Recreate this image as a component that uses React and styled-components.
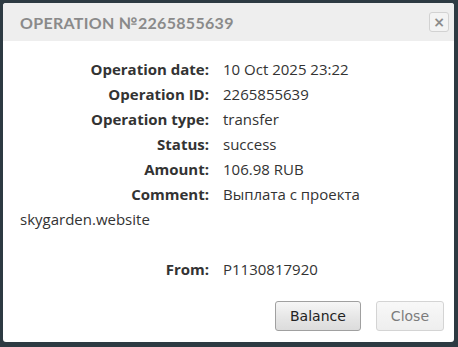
import React from "react";
import styled, { createGlobalStyle } from "styled-components";

const GlobalStyle = createGlobalStyle`
  html, body {
    margin: 0;
    padding: 0;
    background-color: #2d3a42;
  }
  #root {
    padding: 3px 4px 5px 3px;
  }
`;

const Dialog = styled.div`
  background-color: #fff;
  border-radius: 3px;
  height: 339px;
  display: flex;
  flex-direction: column;
  overflow: hidden;
  font-family: "Open Sans", "Liberation Sans", sans-serif;
`;

const Header = styled.div`
  height: 38px;
  background-color: #eeeeee;
  display: flex;
  align-items: center;
  justify-content: space-between;
  padding: 0 5px 0 17px;
  box-sizing: border-box;
`;

const Title = styled.h3`
  margin: 0;
  font-family: "Lato", "Liberation Sans", sans-serif;
  font-weight: 700;
  font-size: 16px;
  letter-spacing: 0.3px;
  color: #8a8a8a;
`;

const CloseX = styled.button`
  width: 20px;
  height: 20px;
  padding: 0;
  border: 1px solid #d2d2d2;
  border-radius: 3px;
  background-color: #f3f3f3;
  color: #8c8c8c;
  font-family: "DejaVu Sans", sans-serif;
  font-weight: 700;
  font-size: 14px;
  line-height: 16px;
  display: flex;
  align-items: center;
  justify-content: center;
`;

const Body = styled.div`
  padding: 16px 17px 0 17px;
  font-size: 15px;
  line-height: 25px;
  color: #333;
`;

const Row = styled.div`
  min-height: 25px;
`;

const Label = styled.span`
  display: inline-block;
  width: 189px;
  margin-right: 14px;
  text-align: right;
  font-weight: 700;
`;

const Footer = styled.div`
  margin-top: auto;
  display: flex;
  justify-content: flex-end;
  gap: 15px;
  padding: 0 10px 11px 0;
`;

const Button = styled.button`
  height: 30px;
  padding: 0 14px;
  border-radius: 3px;
  font-family: "DejaVu Sans", "Liberation Sans", sans-serif;
  font-size: 14px;
  border: 1px solid ${(p) => (p.$primary ? "#a0a0a0" : "#d4d4d4")};
  color: ${(p) => (p.$primary ? "#222" : "#7c7c7c")};
  background: ${(p) =>
    p.$primary
      ? "linear-gradient(#f6f6f6, #e6e6e6 55%, #dcdcdc)"
      : "linear-gradient(#f8f8f8, #eeeeee)"};
`;

const rows = [
  ["Operation date:", "10 Oct 2025 23:22"],
  ["Operation ID:", "2265855639"],
  ["Operation type:", "transfer"],
  ["Status:", "success"],
  ["Amount:", "106.98 RUB"],
];

export default function App() {
  return (
    <>
      <GlobalStyle />
      <Dialog>
        <Header>
          <Title>OPERATION №2265855639</Title>
          <CloseX>×</CloseX>
        </Header>
        <Body>
          {rows.map(([k, v]) => (
            <Row key={k}>
              <Label>{k}</Label>
              {v}
            </Row>
          ))}
          <Row>
            <Label>Comment:</Label>
            Выплата с проекта skygarden.website
          </Row>
          <Row />
          <Row>
            <Label>From:</Label>
            P1130817920
          </Row>
        </Body>
        <Footer>
          <Button $primary>Balance</Button>
          <Button>Close</Button>
        </Footer>
      </Dialog>
    </>
  );
}
